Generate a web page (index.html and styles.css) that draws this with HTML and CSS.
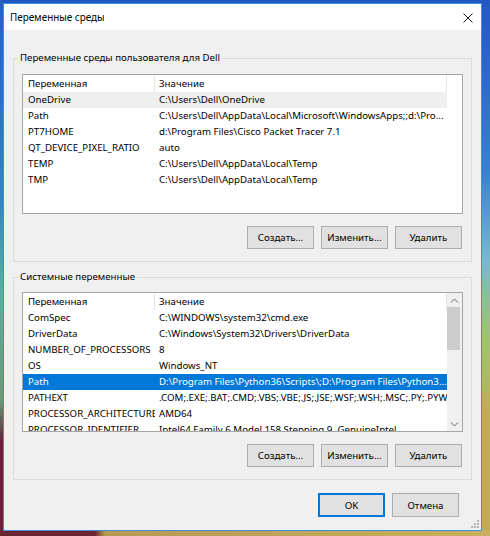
FILE: index.html
```html
<!DOCTYPE html>
<html lang="ru">
<head>
<meta charset="utf-8">
<title>Переменные среды</title>
<link rel="stylesheet" href="styles.css">
</head>
<body>
<div class="window">
  <div class="titlebar">
    <span class="title">Переменные среды</span>
    <svg class="close" width="10" height="10" viewBox="0 0 10 10" aria-label="Закрыть"><path d="M0.5 0.5 L9.5 9.5 M9.5 0.5 L0.5 9.5" stroke="#1a1a1a" stroke-width="1" fill="none"/></svg>
  </div>
  <div class="content">
    <fieldset class="group group-user">
      <legend>Переменные среды пользователя для Dell</legend>
      <div class="list">
        <div class="rows">
          <div class="row head"><span class="c1">Переменная</span><span class="c2">Значение</span></div>
          <div class="row hover"><span class="c1">OneDrive</span><span class="c2">C:\Users\Dell\OneDrive</span></div>
          <div class="row"><span class="c1">Path</span><span class="c2">C:\Users\Dell\AppData\Local\Microsoft\WindowsApps;;d:\Pro...</span></div>
          <div class="row"><span class="c1">PT7HOME</span><span class="c2">d:\Program Files\Cisco Packet Tracer 7.1</span></div>
          <div class="row"><span class="c1">QT_DEVICE_PIXEL_RATIO</span><span class="c2">auto</span></div>
          <div class="row"><span class="c1">TEMP</span><span class="c2">C:\Users\Dell\AppData\Local\Temp</span></div>
          <div class="row"><span class="c1">TMP</span><span class="c2">C:\Users\Dell\AppData\Local\Temp</span></div>
        </div>
      </div>
      <div class="buttons">
        <button class="btn">Создать...</button>
        <button class="btn">Изменить...</button>
        <button class="btn">Удалить</button>
      </div>
    </fieldset>
    <fieldset class="group group-system">
      <legend>Системные переменные</legend>
      <div class="list">
        <div class="rows">
          <div class="row head"><span class="c1">Переменная</span><span class="c2">Значение</span></div>
          <div class="row"><span class="c1">ComSpec</span><span class="c2">C:\WINDOWS\system32\cmd.exe</span></div>
          <div class="row"><span class="c1">DriverData</span><span class="c2">C:\Windows\System32\Drivers\DriverData</span></div>
          <div class="row"><span class="c1">NUMBER_OF_PROCESSORS</span><span class="c2">8</span></div>
          <div class="row"><span class="c1">OS</span><span class="c2">Windows_NT</span></div>
          <div class="row selected"><span class="c1">Path</span><span class="c2">D:\Program Files\Python36\Scripts\;D:\Program Files\Python3...</span></div>
          <div class="row"><span class="c1">PATHEXT</span><span class="c2">.COM;.EXE;.BAT;.CMD;.VBS;.VBE;.JS;.JSE;.WSF;.WSH;.MSC;.PY;.PYW</span></div>
          <div class="row"><span class="c1">PROCESSOR_ARCHITECTURE</span><span class="c2">AMD64</span></div>
          <div class="row"><span class="c1">PROCESSOR_IDENTIFIER</span><span class="c2">Intel64 Family 6 Model 158 Stepping 9, GenuineIntel</span></div>
        </div>
        <div class="scrollbar">
          <div class="arrow"><svg width="9" height="5" viewBox="0 0 9 5"><path d="M1 4.5 L4.5 1 L8 4.5" stroke="#606060" fill="none"/></svg></div>
          <div class="track"><div class="thumb"></div></div>
          <div class="arrow"><svg width="9" height="5" viewBox="0 0 9 5"><path d="M1 0.5 L4.5 4 L8 0.5" stroke="#606060" fill="none"/></svg></div>
        </div>
      </div>
      <div class="buttons">
        <button class="btn">Создать...</button>
        <button class="btn">Изменить...</button>
        <button class="btn">Удалить</button>
      </div>
    </fieldset>
    <div class="footer">
      <button class="btn btn-ok">OK</button>
      <button class="btn">Отмена</button>
    </div>
    <svg class="grip" width="8" height="8" viewBox="0 0 8 8"><g fill="#b4b4b4"><rect x="6" y="0" width="2" height="2"/><rect x="3" y="3" width="2" height="2"/><rect x="6" y="3" width="2" height="2"/><rect x="0" y="6" width="2" height="2"/><rect x="3" y="6" width="2" height="2"/><rect x="6" y="6" width="2" height="2"/></g></svg>
  </div>
</div>
</body>
</html>
```
FILE: styles.css
```css
* { box-sizing: border-box; }
html, body { margin: 0; padding: 0; }
body {
  width: 490px;
  height: 536px;
  overflow: hidden;
  padding: 3px 0 0 3px;
  font-family: "Noto Sans", "Segoe UI", sans-serif;
  font-size: 9.7px;
  color: #000;
  background-color: #1f5ac4;
  background-image:
    linear-gradient(to right, #6b2532 0px, #6b2532 95px, #b69a4e 105px, #c8b060 100%),
    linear-gradient(to bottom, #2a5fc0 0px, #3b7fc6 200px, #5fae9a 290px, #6a9c6a 400px, #6b2532 440px, #6b2532 100%),
    linear-gradient(to bottom, #2457c4 0px, #3a7fd0 170px, #79b9c8 260px, #a8c070 340px, #c0ab58 420px, #c0ab58 100%);
  background-repeat: no-repeat;
  background-position: left bottom, left top, right top;
  background-size: 100% 6px, 3px 100%, 9px 100%;
}
.window {
  width: 479px;
  height: 528px;
  border: 1px solid #3d8ee0;
  background: #f0f0f0;
  display: flex;
  flex-direction: column;
}
.titlebar {
  height: 26px;
  background: #fff;
  display: flex;
  align-items: center;
  justify-content: space-between;
  padding: 0 8px 0 6px;
  flex: none;
  font-size: 9.9px;
}
.title { line-height: 16px; }
.close { display: block; margin-top: 1px; }
.content {
  flex: 1;
  padding: 20px 9px 0 9px;
  position: relative;
}
.group {
  margin: 0;
  padding: 0 8px 12px 8px;
  border: 1px solid #dcdcdc;
  min-width: 0;
}
.group legend {
  padding: 0 2px;
  margin-left: -4px;
  line-height: 16px;
}
.group-system { margin-top: 7px; }
.list {
  margin-top: 8px;
  height: 140px;
  border: 1px solid #a6a6a6;
  background: #fff;
  display: flex;
  overflow: hidden;
}
.group-system .list { margin-top: 7px; }
.rows {
  width: 424px;
  flex: none;
  overflow: hidden;
}
.row {
  display: flex;
  height: 16px;
  line-height: 16px;
  white-space: nowrap;
}
.row.head { height: 17px; line-height: 17px; }
.row .c1 {
  width: 132px;
  flex: none;
  padding-left: 5px;
  overflow: hidden;
}
.row .c2 {
  width: 292px;
  flex: none;
  padding-left: 4px;
  overflow: hidden;
}
.row.head .c1 { border-right: 1px solid #e5e5e5; }
.row.head .c2 { border-right: 1px solid #e5e5e5; }
.row.hover { background: #efefef; }
.row.selected { background: #0078d7; color: #fff; }
.scrollbar {
  width: 15px;
  flex: none;
  background: #f0f0f0;
  display: flex;
  flex-direction: column;
}
.arrow {
  height: 14px;
  display: flex;
  align-items: center;
  justify-content: center;
  flex: none;
}
.arrow svg { display: block; }
.track { flex: 1; padding: 0 2px 0 0; }
.thumb {
  height: 43px;
  background: #cdcdcd;
}
.buttons {
  display: flex;
  justify-content: flex-end;
  gap: 7px;
  margin-top: 12px;
  padding-right: 1px;
}
.btn {
  width: 67px;
  height: 23px;
  padding: 0;
  margin: 0;
  border: 1px solid #adadad;
  background: #e1e1e1;
  font-family: "Noto Sans", "Segoe UI", sans-serif;
  font-size: 9.7px;
  color: #000;
}
.footer {
  display: flex;
  justify-content: flex-end;
  gap: 7px;
  margin-top: 13px;
  padding-right: 13px;
}
.footer .btn { height: 24px; }
.btn-ok { border: 2px solid #0078d7; }
.grip {
  position: absolute;
  right: 2px;
  bottom: 2px;
  display: block;
}
```
